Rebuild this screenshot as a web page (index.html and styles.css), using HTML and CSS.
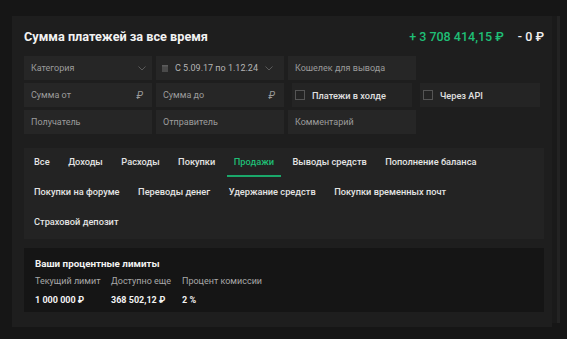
FILE: index.html
```html
<!DOCTYPE html>
<html lang="ru">
<head>
<meta charset="utf-8">
<link rel="stylesheet" href="styles.css">
</head>
<body>
<div class="wrap">
  <div class="panel">
    <div class="header">
      <div class="title">Сумма платежей за все время</div>
      <div class="totals">
        <span class="plus">+ 3 708 414,15 ₽</span>
        <span class="minus">- 0 ₽</span>
      </div>
    </div>
    <div class="filters">
      <div class="field"><span class="ph">Категория</span>
        <svg class="chev" width="8" height="5" viewBox="0 0 8 5"><path d="M0.5 0.5 L4 4 L7.5 0.5" fill="none" stroke="#5a5a5a" stroke-width="1"/></svg>
      </div>
      <div class="field date">
        <svg class="cal" width="6" height="7" viewBox="0 0 6 7"><rect x="0" y="0" width="6" height="7" fill="#4a4a4a"/><rect x="0" y="0" width="6" height="1.5" fill="#5c5c5c"/></svg>
        <span class="dt">С 5.09.17 по 1.12.24</span>
        <svg class="chev2" width="8" height="5" viewBox="0 0 8 5"><path d="M0.5 0.5 L4 4 L7.5 0.5" fill="none" stroke="#5a5a5a" stroke-width="1"/></svg>
      </div>
      <div class="field"><span class="ph">Кошелек для вывода</span></div>
      <div class="empty"></div>

      <div class="field"><span class="ph">Сумма от</span><span class="rub">₽</span></div>
      <div class="field"><span class="ph">Сумма до</span><span class="rub">₽</span></div>
      <div class="check c1"><span class="box"></span><span class="cl">Платежи в холде</span></div>
      <div class="check"><span class="box"></span><span class="cl">Через API</span></div>

      <div class="field"><span class="ph">Получатель</span></div>
      <div class="field"><span class="ph">Отправитель</span></div>
      <div class="field"><span class="ph">Комментарий</span></div>
      <div class="empty"></div>
    </div>

    <div class="tabs">
      <div class="tab">Все</div>
      <div class="tab">Доходы</div>
      <div class="tab">Расходы</div>
      <div class="tab">Покупки</div>
      <div class="tab active">Продажи</div>
      <div class="tab">Выводы средств</div>
      <div class="tab">Пополнение баланса</div>
      <div class="tab">Покупки на форуме</div>
      <div class="tab">Переводы денег</div>
      <div class="tab">Удержание средств</div>
      <div class="tab">Покупки временных почт</div>
      <div class="tab">Страховой депозит</div>
    </div>

    <div class="limits">
      <div class="ltitle">Ваши процентные лимиты</div>
      <div class="lgrid">
        <div class="lab">Текущий лимит</div>
        <div class="lab">Доступно еще</div>
        <div class="lab">Процент комиссии</div>
        <div class="val">1 000 000 ₽</div>
        <div class="val">368 502,12 ₽</div>
        <div class="val">2 %</div>
      </div>
    </div>
  </div>
  <div class="scroll"><div class="thumb"></div></div>
</div>
</body>
</html>
```

FILE: styles.css
```css
* { box-sizing: border-box; }
html, body { margin: 0; padding: 0; }
body {
  background: #161616;
  font-family: Roboto, "Noto Sans", "DejaVu Sans", sans-serif;
  color: #e6e6e6;
  width: 567px;
  height: 339px;
  overflow: hidden;
}
.wrap {
  display: flex;
  padding: 16px 0 0 12px;
}
.panel {
  width: 540px;
  height: 311px;
  background: #1e1e1e;
  padding: 10px 8px 0 12px;
}
.scroll {
  width: 8px;
  height: 307px;
  display: flex;
  background: #1a1a1a;
}
.thumb {
  margin-left: 5px;
  width: 3px;
  background: #232323;
}
.header {
  display: flex;
  justify-content: space-between;
  align-items: center;
  height: 20px;
  margin-bottom: 10px;
}
.title {
  font-size: 12.7px;
  font-weight: 700;
  color: #f2f2f2;
}
.totals {
  display: flex;
  gap: 14px;
  font-size: 12.5px;
  font-weight: 500;
}
.plus { color: #1fbf76; }
.minus { color: #f0f0f0; }

.filters {
  display: grid;
  grid-template-columns: 128px 128px 128px 120px;
  grid-auto-rows: 24px;
  column-gap: 4px;
  row-gap: 3px;
}
.field {
  background: #262626;
  display: flex;
  align-items: center;
  padding: 0 6px 0 7px;
  font-size: 9px;
  white-space: nowrap;
}
.ph { color: #9c9c9c; flex: 1; }
.rub { color: #9a9a9a; font-size: 10px; font-style: italic; margin-right: 3px; }
.date { padding-left: 6px; }
.cal { margin-right: 7px; flex: none; }
.dt { color: #b4b4b4; }
.chev2 { margin-left: 7px; flex: none; }
.check {
  background: #242424;
  display: flex;
  align-items: center;
  padding: 0 0 0 3px;
  font-size: 9.2px;
  white-space: nowrap;
}
.check.c1 { margin: 0 4px 0 4px; }
.box {
  width: 10px;
  height: 10px;
  border: 1px solid #555;
  margin-right: 7px;
  flex: none;
}
.cl { color: #e0e0e0; font-weight: 500; }

.tabs {
  margin-top: 14px;
  background: #232323;
  display: flex;
  flex-wrap: wrap;
  padding: 0 0 1px 3px;
  column-gap: 4.5px;
}
.tab {
  position: relative;
  height: 30px;
  padding: 7px 7px 0;
  line-height: 13px;
  font-size: 9.25px;
  font-weight: 500;
  color: #e4e4e4;
  white-space: nowrap;
}
.tab.active { color: #1fbf76; }
.tab.active::after {
  content: "";
  position: absolute;
  left: 0;
  right: 0;
  top: 27px;
  height: 2px;
  background: #1aa86a;
}

.limits {
  margin-top: 9px;
  background: #151515;
  height: 64px;
  padding: 9px 11px 0;
}
.ltitle {
  font-size: 9.8px;
  font-weight: 700;
  color: #f2f2f2;
  line-height: 14px;
}
.lgrid {
  display: grid;
  grid-template-columns: 76px 71px auto;
  row-gap: 4px;
  margin-top: 3px;
  white-space: nowrap;
}
.lab { font-size: 9px; color: #a8a8a8; line-height: 14px; }
.val { font-size: 9px; font-weight: 700; color: #f2f2f2; line-height: 16px; }
```
